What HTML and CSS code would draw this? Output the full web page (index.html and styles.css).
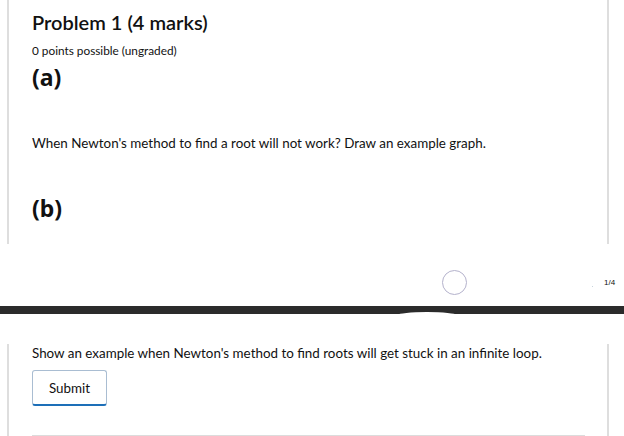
FILE: index.html
```html
<!DOCTYPE html>
<html>
<head>
    <meta charset="UTF-8">
    <title>Problem 1 (4 marks)</title>
    <link rel="stylesheet" href="styles.css">
</head>
<body>
    <div class="panel panel-top">
        <h2 class="problem-title">Problem 1 (4 marks)</h2>
        <div class="points">0 points possible (ungraded)</div>
        <h3 class="part">(a)</h3>
        <p class="question">When Newton's method to find a root will not work? Draw an example graph.</p>
        <h3 class="part part-b">(b)</h3>
    </div>

    <div class="pager">
        <span class="spinner"></span>
        <span class="page-dot"></span>
        <span class="page-num">1/4</span>
    </div>

    <div class="toolbar"><span class="toolbar-glare"></span></div>

    <div class="panel panel-bottom">
        <p class="question">Show an example when Newton's method to find roots will get stuck in an infinite loop.</p>
        <button class="submit-button">Submit</button>
        <div class="divider"></div>
    </div>
</body>
</html>
```

FILE: styles.css
```css
body {
    font-family: Lato, 'Noto Sans', sans-serif;
    margin: 0;
    padding: 0;
    background: #fff;
    color: #111;
}

.panel {
    margin: 0 15px 0 7px;
    border-left: 2px solid #dedede;
    border-right: 2px solid #dedede;
    padding-left: 23px;
    padding-right: 23px;
}

.panel-top {
    height: 244px;
    box-sizing: border-box;
    padding-top: 10px;
}

.problem-title {
    font-size: 20px;
    font-weight: 600;
    margin: 0;
    line-height: 24px;
}

.points {
    font-size: 11.8px;
    margin-top: 10px;
    line-height: 14px;
}

.part {
    font-family: 'Noto Sans', sans-serif;
    font-size: 23px;
    font-weight: bold;
    margin: 5px 0 0;
    line-height: 28px;
}

.question {
    font-size: 13.4px;
    margin: 0;
    line-height: 18px;
}

.panel-top .question {
    margin-top: 43px;
}

.part-b {
    margin-top: 42px;
}

.pager {
    height: 62px;
    display: flex;
    align-items: center;
    padding-top: 14px;
    box-sizing: border-box;
}

.spinner {
    width: 23px;
    height: 23px;
    border: 1px solid #b4b2cc;
    border-radius: 50%;
    margin-left: 442px;
}

.page-dot {
    width: 1px;
    height: 1px;
    background: #c8d4dc;
    margin-left: 125px;
    margin-top: 8px;
}

.page-num {
    font-family: 'Liberation Sans', Arial, sans-serif;
    font-size: 8px;
    margin-left: 11px;
}

.toolbar {
    height: 8px;
    background: #2b2b2b;
    position: relative;
}

.toolbar-glare {
    position: absolute;
    left: 398px;
    top: 6px;
    width: 58px;
    height: 6px;
    border-radius: 50%;
    background: #fff;
}

.panel-bottom {
    margin-top: 30px;
    padding-top: 0;
}

.submit-button {
    font-family: Lato, 'Noto Sans', sans-serif;
    font-size: 13.4px;
    color: #111;
    background: #fff;
    border: 1px solid #a9bdd2;
    border-bottom: 2px solid #1d6fb8;
    border-radius: 3px;
    width: 75px;
    height: 36px;
    margin-top: 8px;
    cursor: pointer;
}

.divider {
    height: 1px;
    background: #dcdcdc;
    margin-top: 29px;
    width: 553px;
}
```
